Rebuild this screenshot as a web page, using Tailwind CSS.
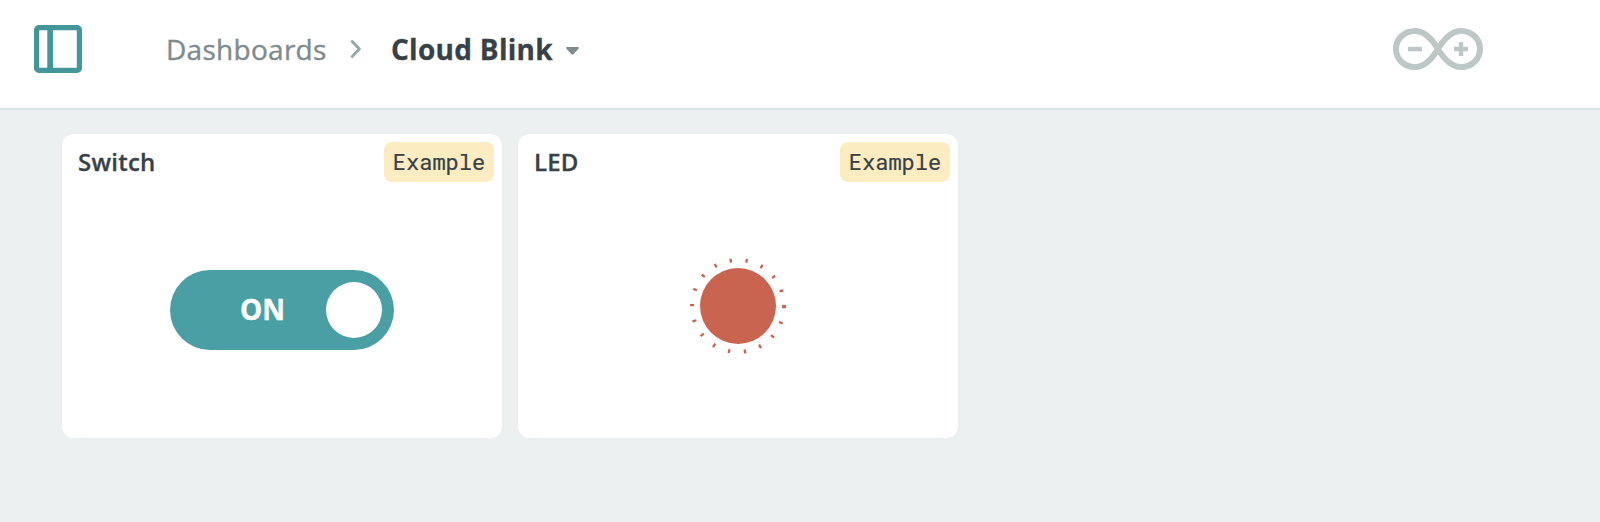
<!DOCTYPE html>
<html lang="en">
<head>
<meta charset="utf-8">
<title>Cloud Blink</title>
<script src="https://cdn.jsdelivr.net/npm/@tailwindcss/browser@4"></script>
</head>
<body class="h-[522px] overflow-hidden bg-[#ecf0f1] font-['Open_Sans','Noto_Sans',sans-serif] text-[#374146]">
<header class="flex h-[110px] items-start border-b-2 border-[#dae3e3] bg-white pl-[34px] pt-[25px]">
  <svg class="size-12 shrink-0" viewBox="0 0 48 48" fill="none" stroke="#439799" stroke-width="5.2"><rect x="2.6" y="2.6" width="42.8" height="42.8" rx="2.2"/><path d="M16.2 3v42" stroke-width="5.8"/></svg>
  <nav class="ml-[84px] flex h-12 items-center whitespace-nowrap text-[28px] leading-[48px]">
    <span class="w-[160px] tracking-[0.28px] text-[#7f8c8d] [-webkit-text-stroke:0.4px_#7f8c8d]">Dashboards</span>
    <svg class="ml-[24px] h-[18px] w-3 shrink-0" viewBox="0 0 12 18" fill="none" stroke="#95a5a6" stroke-width="2.8" stroke-linecap="round" stroke-linejoin="round"><path d="M2.2 1.6l7.2 7.4-7.2 7.4"/></svg>
    <span class="ml-[29px] w-[175px] font-bold tracking-[0.28px] [-webkit-text-stroke:0.3px_#374146]">Cloud Blink</span>
    <svg class="mt-1 h-2 w-[13px] shrink-0" viewBox="0 0 13 8" fill="#7f8c8d"><path d="M.8 0h11.4q1.2.6.3 1.7L7.7 7.1q-1.2 1.2-2.4 0L.5 1.7Q-.4.6.8 0z"/></svg>
  </nav>
  <svg class="ml-auto mr-[117px] mt-[3px] h-[42px] w-[90px]" viewBox="0 0 90 42" fill="none" stroke="#bdc7c6" stroke-width="6"><path d="M45 21C39 11 32 3 22 3C11 3 3 11 3 21S11 39 22 39C32 39 39 31 45 21S58 3 68 3C79 3 87 11 87 21S79 39 68 39C58 39 51 31 45 21z"/><path d="M15 21h14M61 21h14M68 14v14" stroke-width="4.4"/></svg>
</header>
<main class="flex gap-4 pl-[62px] pt-6">
  <section class="flex h-[304px] w-[440px] flex-col rounded-xl bg-white p-2">
    <div class="flex h-10 items-center justify-between pl-2">
      <h2 class="text-2xl font-semibold tracking-[0.24px] [-webkit-text-stroke:0.3px_#374146]">Switch</h2>
      <span class="flex h-10 w-[110px] items-center justify-center rounded-lg bg-[#fbecc2] pb-0.5 font-['Roboto_Mono','DejaVu_Sans_Mono',monospace] text-[22px] [-webkit-text-stroke:0.2px_#374146]">Example</span>
    </div>
    <div class="mx-auto mt-[88px] flex h-20 w-56 items-center justify-end rounded-full bg-[#4a9fa5] pr-3">
      <span class="mr-[41px] pb-[3px] text-[28px] font-bold text-white [-webkit-text-stroke:0.4px_#fff]">ON</span>
      <span class="size-14 rounded-full bg-white"></span>
    </div>
  </section>
  <section class="flex h-[304px] w-[440px] flex-col rounded-xl bg-white p-2">
    <div class="flex h-10 items-center justify-between pl-2">
      <h2 class="text-2xl font-semibold tracking-[0.1px] [-webkit-text-stroke:0.3px_#374146]">LED</h2>
      <span class="flex h-10 w-[110px] items-center justify-center rounded-lg bg-[#fbecc2] pb-0.5 font-['Roboto_Mono','DejaVu_Sans_Mono',monospace] text-[22px] [-webkit-text-stroke:0.2px_#374146]">Example</span>
    </div>
    <svg class="mx-auto mt-[74px] size-[100px]" viewBox="0 0 100 100"><circle cx="50" cy="50" r="38" fill="#c96450"/><circle cx="50" cy="50" r="46" fill="none" stroke="#c96450" stroke-width="4" stroke-dasharray="2.3 13.7"/><path d="M94 48.9h4v1.2h-4z" fill="#c96450"/></svg>
  </section>
</main>
</body>
</html>
